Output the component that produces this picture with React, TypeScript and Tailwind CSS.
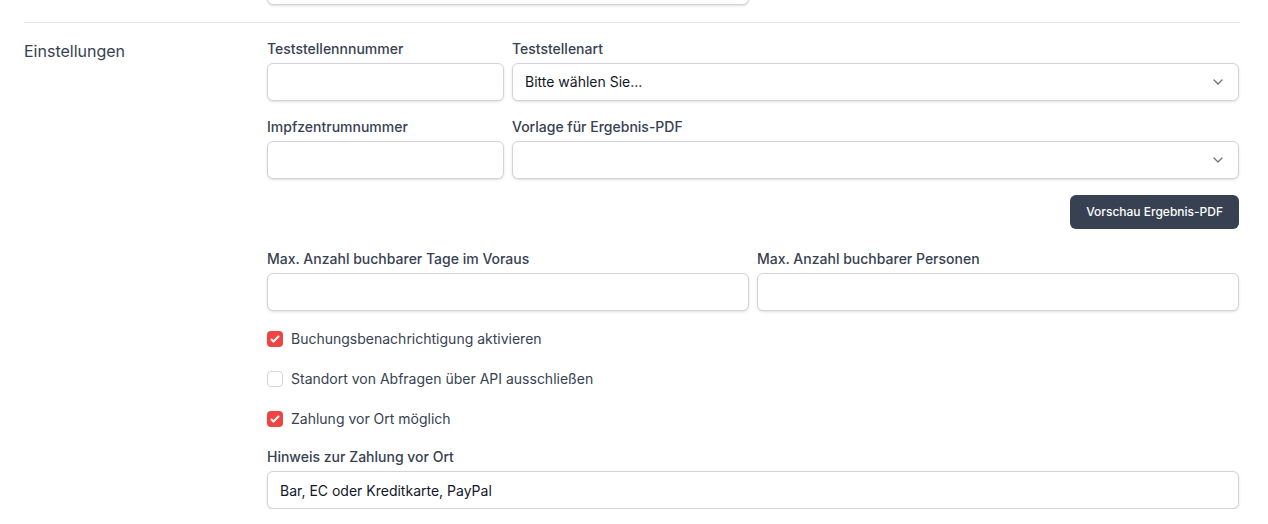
import { ReactNode } from "react";

const Label = ({ children }: { children: ReactNode }) => (
  <label className="block text-sm font-medium leading-5 text-[#374151]">{children}</label>
);

const TextInput = ({ value = "" }: { value?: string }) => (
  <input
    type="text"
    defaultValue={value}
    className="mt-1 block h-[38px] w-full rounded-md border border-[#d1d5db] bg-white px-3 text-sm text-[#111827] shadow-sm outline-none"
  />
);

const Select = ({ value = "" }: { value?: string }) => (
  <div className="relative mt-1 flex h-[38px] w-full items-center rounded-md border border-[#d1d5db] bg-white pl-3 pr-10 text-sm text-[#111827] shadow-sm">
    <span>{value}</span>
    <svg
      className="absolute right-[10px] top-1/2 h-5 w-5 -translate-y-1/2"
      viewBox="0 0 20 20"
      fill="none"
    >
      <path d="M6 8l4 4 4-4" stroke="#6b7280" strokeWidth="1.3" strokeLinecap="round" strokeLinejoin="round" />
    </svg>
  </div>
);

const Field = ({ label, children, className = "" }: { label: string; children: ReactNode; className?: string }) => (
  <div className={className}>
    <Label>{label}</Label>
    {children}
  </div>
);

const Checkbox = ({ checked, label }: { checked: boolean; label: string }) => (
  <div className="col-span-4 flex h-6 items-center">
    {checked ? (
      <span className="flex h-4 w-4 items-center justify-center rounded bg-[#ef4444]">
        <svg viewBox="0 0 16 16" className="h-4 w-4" fill="white">
          <path d="M12.207 4.793a1 1 0 010 1.414l-5 5a1 1 0 01-1.414 0l-2-2a1 1 0 011.414-1.414L6.5 9.086l4.293-4.293a1 1 0 011.414 0z" />
        </svg>
      </span>
    ) : (
      <span className="h-4 w-4 rounded border border-[#d1d5db] bg-white" />
    )}
    <span className="ml-2 text-sm text-[#374151]">{label}</span>
  </div>
);

const App = () => {
  return (
    <div className="min-h-screen bg-white pl-6 pr-[28px] font-['Inter','Noto_Sans',sans-serif] text-[#374151]">
      <div className="-mt-[33px] flex pb-[17px]">
        <div className="w-[243px] shrink-0" />
        <div className="grid flex-1 grid-cols-4 gap-x-2 pr-px">
          <input className="col-span-2 h-[38px] w-full rounded-md border border-[#d1d5db] bg-white shadow-sm" />
        </div>
      </div>

      <div className="flex border-t border-[#e5e7eb] pt-4">
        <div className="w-[243px] shrink-0 text-base leading-6 text-[#374151]">Einstellungen</div>
        <div className="grid flex-1 grid-cols-4 gap-x-2 gap-y-4 pr-px">
          <Field label="Teststellennnummer">
            <TextInput />
          </Field>
          <Field label="Teststellenart" className="col-span-3">
            <Select value="Bitte wählen Sie..." />
          </Field>
          <Field label="Impfzentrumnummer">
            <TextInput />
          </Field>
          <Field label="Vorlage für Ergebnis-PDF" className="col-span-3">
            <Select />
          </Field>
          <div className="col-span-4 flex justify-end pb-1">
            <button className="h-[34px] rounded-md bg-[#374151] px-4 text-xs font-medium text-white">
              Vorschau Ergebnis-PDF
            </button>
          </div>
          <Field label="Max. Anzahl buchbarer Tage im Voraus" className="col-span-2">
            <TextInput />
          </Field>
          <Field label="Max. Anzahl buchbarer Personen" className="col-span-2">
            <TextInput />
          </Field>
          <Checkbox checked label="Buchungsbenachrichtigung aktivieren" />
          <Checkbox checked={false} label="Standort von Abfragen über API ausschließen" />
          <Checkbox checked label="Zahlung vor Ort möglich" />
          <Field label="Hinweis zur Zahlung vor Ort" className="col-span-4">
            <TextInput value="Bar, EC oder Kreditkarte, PayPal" />
          </Field>
        </div>
      </div>
    </div>
  );
};

export default App;
